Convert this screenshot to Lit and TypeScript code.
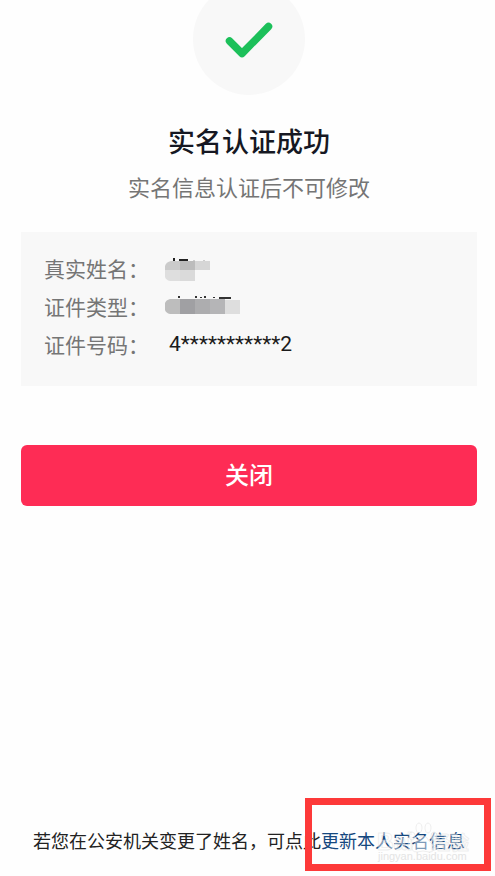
import { LitElement, html, css } from "lit";
import { customElement } from "lit/decorators.js";

@customElement("app-root")
export class AppRoot extends LitElement {
  static styles = css`
    :host {
      display: flex;
      flex-direction: column;
      box-sizing: border-box;
      min-height: 100vh;
      overflow: hidden;
      background: #fefefe;
      color: #161823;
      font-family: Roboto, "Noto Sans CJK SC", sans-serif;
    }
    .result {
      display: flex;
      flex-direction: column;
      align-items: center;
      padding: 0 18px 0 21px;
    }
    .badge {
      display: block;
      width: 112px;
      height: 112px;
      margin-top: -17px;
    }
    h1 {
      margin: 28px 0 0;
      font-size: 27px;
      line-height: 40px;
      font-weight: 500;
    }
    .note {
      margin: 10px 0 0;
      font-size: 22px;
      line-height: 32px;
      color: #757575;
    }
    .details {
      display: flex;
      flex-direction: column;
      margin: 27px 18px 0 21px;
      padding: 17px 23px 23px;
      background: #f8f8f8;
    }
    .row {
      display: flex;
      align-items: center;
      height: 38px;
      font-size: 21px;
    }
    dt {
      width: 121px;
      color: #757575;
    }
    dd {
      margin: 0;
    }
    .number {
      padding-left: 4px;
      color: #1b1b1b;
    }
    .mask {
      display: block;
    }
    .close {
      height: 61px;
      margin: 59px 18px 0 21px;
      padding: 0;
      border: 0;
      border-radius: 6px;
      background: #fe2c55;
      color: #fff;
      font: 500 24px/36px Roboto, "Noto Sans CJK SC", sans-serif;
    }
    footer {
      position: relative;
      display: flex;
      justify-content: center;
      margin-top: auto;
      padding: 28px 0 20px 3px;
      font-size: 18px;
      line-height: 28px;
      white-space: nowrap;
      color: #222;
    }
    a {
      color: #15487f;
      text-decoration: none;
    }
    .frame {
      position: absolute;
      right: 4px;
      bottom: 5px;
      width: 186px;
      height: 73px;
      box-sizing: border-box;
      border: 7px solid #fd3939;
    }
    .mark {
      position: absolute;
      right: 20px;
      bottom: 12px;
      pointer-events: none;
      font-family: "Liberation Sans", "Noto Sans CJK SC", sans-serif;
    }
  `;

  render() {
    return html`
      <main class="result">
        <svg class="badge" viewBox="0 0 112 112" aria-hidden="true">
          <circle cx="56" cy="56" r="56" fill="#f8f8f8" />
          <path d="M36.500 58 L49 70.500 L75.500 43.500" fill="none" stroke="#1cc05a" stroke-width="7.500" stroke-linecap="round" stroke-linejoin="round" />
        </svg>
        <h1>实名认证成功</h1>
        <p class="note">实名信息认证后不可修改</p>
      </main>
      <dl class="details">
        <div class="row">
          <dt>真实姓名：</dt>
          <dd>
            <svg class="mask" width="46" height="26" viewBox="0 0 46 26" role="img" aria-label="已隐藏">
              <path d="M8 6V3h2v3zM14 4h9v2h-9z" fill="#222" />
              <path d="M28 5h2v1h-2zM38 5h2v1h-2z" fill="#ccc" />
              <path d="M0 15V11q1-4 6-5h9v9z" fill="#cbcbcb" />
              <path d="M15 6h15v9H15z" fill="#bcbcbc" />
              <path d="M30 6h15v9H30z" fill="#d6d6d6" />
              <path d="M0 15h15v11H5q-4-1-5-4z" fill="#dedede" />
              <path d="M15 15h15v11H15z" fill="#dadada" />
            </svg>
          </dd>
        </div>
        <div class="row">
          <dt>证件类型：</dt>
          <dd>
            <svg class="mask" width="76" height="24" viewBox="0 2 76 24" role="img" aria-label="已隐藏">
              <path d="M13 6V4h2v2zM30 6V4h2v2zM35 6V5h2v1zM39 6V4h2v2zM48 6V5h2v1zM54 5h12v2H54z" fill="#333" />
              <path d="M0 18V11q1-3 5-4h10v15H5q-4-1-5-4z" fill="#bdbdbd" />
              <path d="M15 7h15v15H15z" fill="#a0a0a3" />
              <path d="M30 7h15v15H30z" fill="#adadaf" />
              <path d="M45 7h15v15H45z" fill="#b5b5b7" />
              <path d="M60 8h15v14H60z" fill="#dedede" />
            </svg>
          </dd>
        </div>
        <div class="row">
          <dt>证件号码：</dt>
          <dd class="number">4***********2</dd>
        </div>
      </dl>
      <button class="close" type="button">关闭</button>
      <footer>
        <span>若您在公安机关变更了姓名，可点此</span><a href="#update">更新本人实名信息</a>
        <div class="frame"></div>
        <svg class="mark" width="98" height="42" viewBox="0 0 98 42" aria-hidden="true">
          <g fill="#fff" fill-opacity="0.45" stroke="#d0d0d0" stroke-opacity="0.35">
            <text x="0" y="28" font-size="23" font-weight="700">Bai</text>
            <text x="54" y="28" font-size="19" font-weight="700">经验</text>
            <ellipse cx="35" cy="14" rx="3" ry="4" />
            <ellipse cx="42" cy="6" rx="3" ry="5" />
            <ellipse cx="51" cy="6" rx="3" ry="5" />
            <ellipse cx="57" cy="14" rx="3" ry="4" />
            <path d="M46 14q4 0 6 5l4 4q3 7-4 7-6-2-12 0-7 0-4-7l4-4q2-5 6-5z" />
          </g>
          <text x="1" y="38" font-size="11" fill="#e4e4e4">jingyan.baidu.com</text>
        </svg>
      </footer>
    `;
  }
}
